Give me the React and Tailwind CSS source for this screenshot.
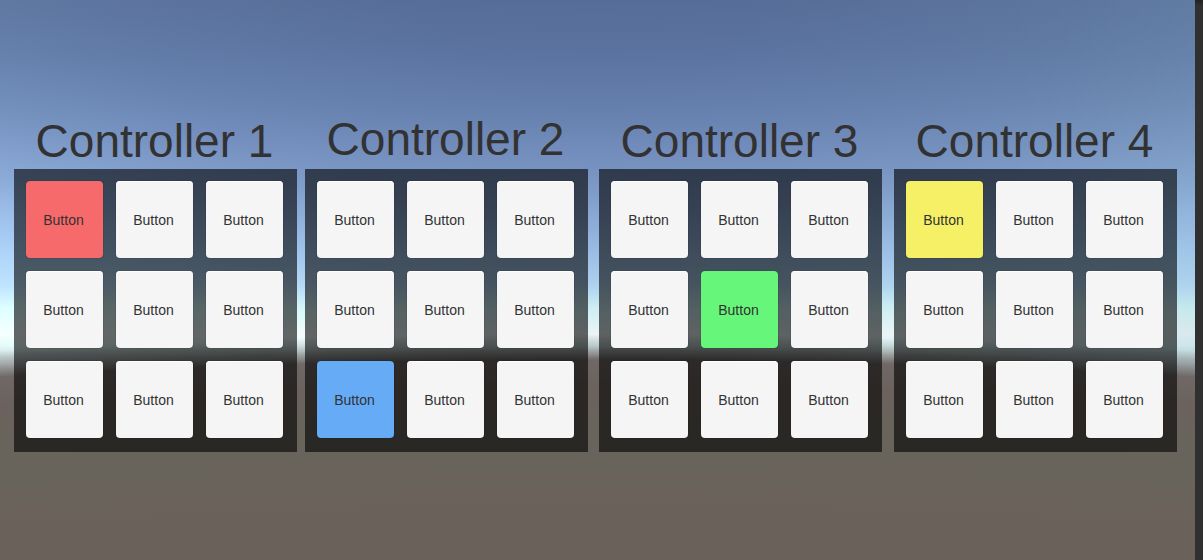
const WHITE = "bg-[#f5f5f5] shadow-[inset_0_1px_0_#ffffff,0_0_1px_rgba(0,0,0,0.7)]";
const RED = "bg-[#f66a6c] shadow-[0_0_1px_rgba(0,0,0,0.7)]";
const BLUE = "bg-[#65abf6] shadow-[0_0_1px_rgba(0,0,0,0.7)]";
const GREEN = "bg-[#66f67a] shadow-[0_0_1px_rgba(0,0,0,0.7)]";
const YELLOW = "bg-[#f5f065] shadow-[0_0_1px_rgba(0,0,0,0.7)]";

const controllers = [
  { id: 1, lit: 0, color: RED, spacing: "ml-[14px]", title: "pb-[2px]" },
  { id: 2, lit: 6, color: BLUE, spacing: "ml-[8px]", title: "pb-[4px]" },
  { id: 3, lit: 4, color: GREEN, spacing: "ml-[11px]", title: "pb-[2px]" },
  { id: 4, lit: 0, color: YELLOW, spacing: "ml-[12px]", title: "pb-[2px]" },
];

function Controller({ id, lit, color, spacing, title }) {
  return (
    <section aria-labelledby={`controller-${id}`} className={`flex flex-col ${spacing}`}>
      <h2
        id={`controller-${id}`}
        className={`pr-[2px] text-center text-[46px] leading-[52px] whitespace-nowrap ${title}`}
      >
        Controller {id}
      </h2>
      <div className="grid grid-cols-3 gap-[13px] bg-black/60 pt-[12px] pr-[14px] pb-[14px] pl-[12px]">
        {Array.from({ length: 9 }, (_, i) => (
          <button
            key={i}
            type="button"
            className={`size-[77px] rounded-[4px] pt-[2px] pr-[2px] text-[14px] ${i === lit ? color : WHITE}`}
          >
            Button
          </button>
        ))}
      </div>
    </section>
  );
}

const ground =
  "bg-[radial-gradient(circle_10506px_at_50%_10838px,#6b615b_0,#6b615b_10330px,#68635b_10370px,#68645c_10410px,#6b625d_10450px,#6f6866_10478px,#6f6866b3_10483px,#6f686659_10491px,#6f686600_10504px)]";
const zenith =
  "bg-[radial-gradient(ellipse_760px_440px_at_50%_-60px,rgba(60,75,125,0.38),rgba(60,75,125,0.33)_30%,rgba(60,75,125,0.2)_65%,rgba(60,75,125,0)),linear-gradient(90deg,rgba(105,142,165,0)_60%,rgba(105,142,165,0.2))]";
const sky =
  "bg-[linear-gradient(180deg,#647ea7_0,#6b87b2_54px,#7795c1_107px,#83a1cf_143px,#8eaeda_180px,#9dc0e9_215px,#acd2f8_250px,#bee4ff_285px,#dcffff_308px,#f6ffff_334px,#e4fbfb_346px,#c8d8d8_358px,#b0bcbc_372px)]";

export default function App() {
  return (
    <div className="flex min-h-screen bg-[#303030] font-['Liberation_Sans',Arial,sans-serif] text-[#323232]">
      <main className={`grid flex-1 ${sky}`}>
        <div className={`grid ${zenith}`}>
          <div className={`flex items-end pb-[108px] ${ground}`}>
            {controllers.map((c) => (
              <Controller key={c.id} {...c} />
            ))}
          </div>
        </div>
      </main>
      <div className="w-[8px] shrink-0 bg-[linear-gradient(180deg,#222222,#303030_6px)]" />
    </div>
  );
}
